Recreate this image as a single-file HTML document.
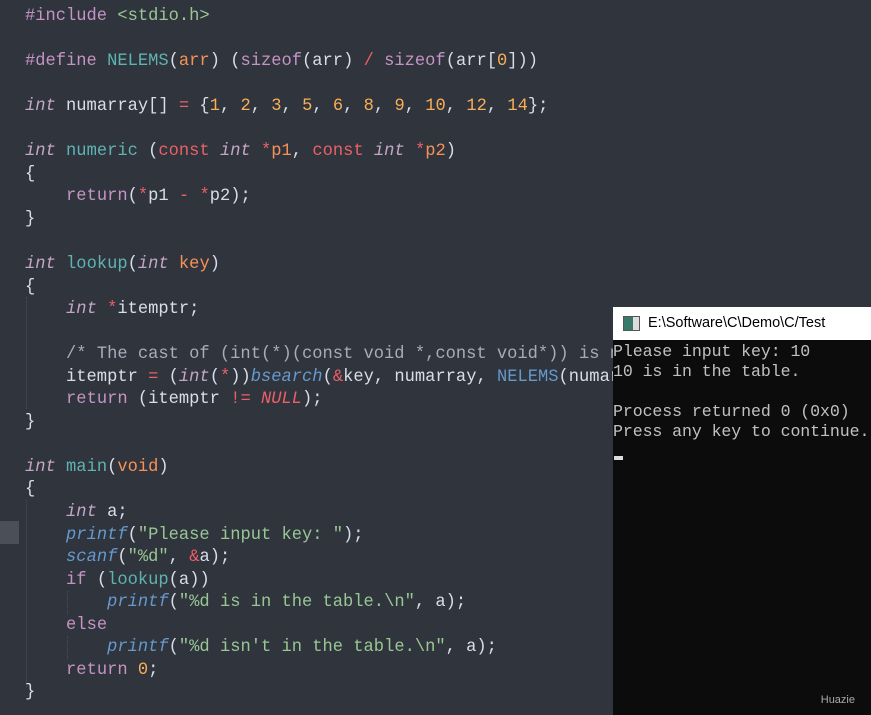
<!DOCTYPE html>
<html><head><meta charset="utf-8"><style>
html,body{margin:0;padding:0;width:871px;height:715px;overflow:hidden;background:#2f343d;}
#code{position:absolute;left:25px;top:6px;font-family:"Liberation Mono",monospace;font-size:17.1px;line-height:22.55px;white-space:pre;color:#d8dee9;}
.pp{color:#c594c5}.fn{color:#5fb3b3}.pa{color:#f99157}.op{color:#ec5f67}.nu{color:#f9ae58}
.st{color:#99c794}.bi{color:#6699cc;font-style:italic}.ty{color:#c5a5c5;font-style:italic}
.cm{color:#a6acb9}.nl{color:#ec5f67;font-style:italic}.bl{color:#6699cc}
#gut{position:absolute;left:0;top:521px;width:19px;height:23px;background:#4a4f58}
.guide{position:absolute;border-left:1px dotted #4a505a;width:0}
#con{position:absolute;left:613px;top:307px;width:258px;height:408px;background:#0c0c0c}
#title{height:33px;background:#fff;font-family:"Liberation Sans",sans-serif;font-size:14.5px;color:#000;line-height:33px;padding-left:35px;position:relative}
#ico{position:absolute;left:10px;top:9px;width:15px;height:13px;border:1px solid #555;background:linear-gradient(90deg,#3a7a6a 60%,#ddd 60%)}
#out{font-family:"Liberation Mono",monospace;font-size:16.6px;line-height:20px;color:#c0c0c0;white-space:pre;position:absolute;left:0;top:35px;letter-spacing:-0.1px}
#cur{position:absolute;left:1px;top:149px;width:9px;height:4px;background:#ddd}
#wm{position:absolute;right:16px;bottom:9px;font-family:"Liberation Sans",sans-serif;font-size:11px;color:#aaa}
</style></head><body>
<div id="gut"></div>
<div class="guide" style="left:26px;top:297px;height:112px"></div>
<div class="guide" style="left:26px;top:500px;height:187px"></div>
<div class="guide" style="left:67px;top:591px;height:23px"></div>
<div class="guide" style="left:67px;top:636px;height:23px"></div>
<div id="code"><span class="pp">#include</span> <span class="st">&lt;stdio.h&gt;</span>

<span class="pp">#define</span> <span class="fn">NELEMS</span>(<span class="pa">arr</span>) (<span class="pp">sizeof</span>(arr) <span class="op">/</span> <span class="pp">sizeof</span>(arr[<span class="nu">0</span>]))

<span class="ty">int</span> numarray[] <span class="op">=</span> {<span class="nu">1</span>, <span class="nu">2</span>, <span class="nu">3</span>, <span class="nu">5</span>, <span class="nu">6</span>, <span class="nu">8</span>, <span class="nu">9</span>, <span class="nu">10</span>, <span class="nu">12</span>, <span class="nu">14</span>};

<span class="ty">int</span> <span class="fn">numeric</span> (<span class="op">const</span> <span class="ty">int</span> <span class="op">*</span><span class="pa">p1</span>, <span class="op">const</span> <span class="ty">int</span> <span class="op">*</span><span class="pa">p2</span>)
{
    <span class="pp">return</span>(<span class="op">*</span>p1 <span class="op">-</span> <span class="op">*</span>p2);
}

<span class="ty">int</span> <span class="fn">lookup</span>(<span class="ty">int</span> <span class="pa">key</span>)
{
    <span class="ty">int</span> <span class="op">*</span>itemptr;

    <span class="cm">/* The cast of (int(*)(const void *,const void*)) is needed</span>
    itemptr <span class="op">=</span> (<span class="ty">int</span>(<span class="op">*</span>))<span class="bi">bsearch</span>(<span class="op">&amp;</span>key, numarray, <span class="bl">NELEMS</span>(numarray), sizeof(int), numeric);
    <span class="pp">return</span> (itemptr <span class="op">!=</span> <span class="nl">NULL</span>);
}

<span class="ty">int</span> <span class="fn">main</span>(<span class="pa">void</span>)
{
    <span class="ty">int</span> a;
    <span class="bi">printf</span>(<span class="st">"Please input key: "</span>);
    <span class="bi">scanf</span>(<span class="st">"%d"</span>, <span class="op">&amp;</span>a);
    <span class="pp">if</span> (<span class="fn">lookup</span>(a))
        <span class="bi">printf</span>(<span class="st">"%d is in the table.\n"</span>, a);
    <span class="pp">else</span>
        <span class="bi">printf</span>(<span class="st">"%d isn't in the table.\n"</span>, a);
    <span class="pp">return</span> <span class="nu">0</span>;
}</div>
<div id="con">
<div id="title"><div id="ico"></div>E:\Software\C\Demo\C/Test</div>
<div id="out">Please input key: 10
10 is in the table.

Process returned 0 (0x0)
Press any key to continue.</div>
<div id="cur"></div>
<div id="wm">Huazie</div>
</div>
</body></html>
